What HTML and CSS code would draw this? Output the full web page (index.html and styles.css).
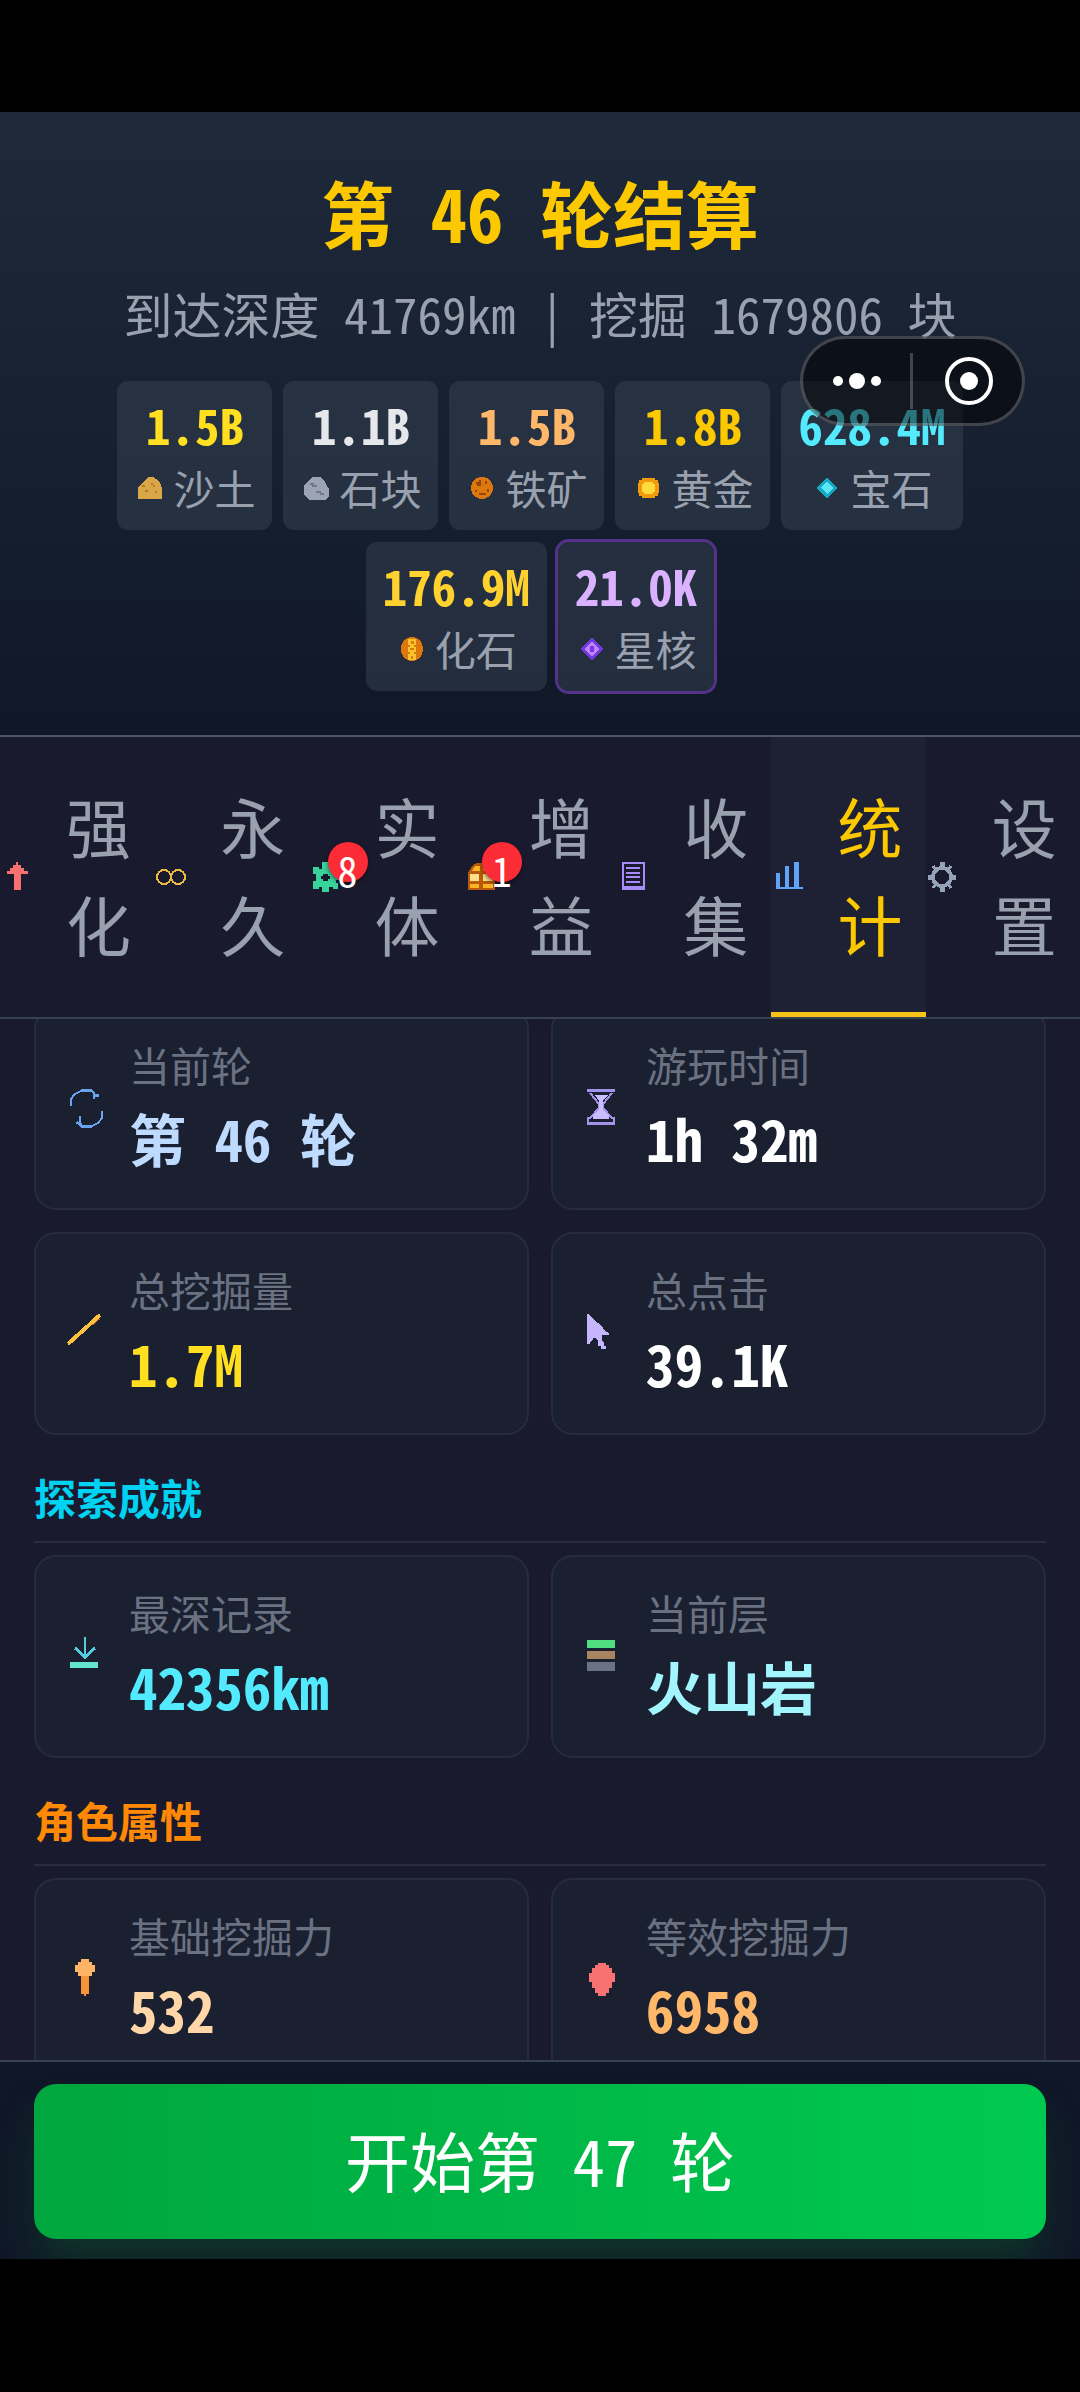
FILE: index.html
```html
<!DOCTYPE html>
<html lang="zh-CN">
<head>
<meta charset="utf-8">
<meta name="viewport" content="width=device-width, initial-scale=1">
<title>第 46 轮结算</title>
<link rel="stylesheet" href="styles.css">
</head>
<body>
<div class="app">
  <header class="summary">
    <h1 class="summary-title">第 46 轮结算</h1>
    <p class="summary-sub">到达深度 41769km | 挖掘 1679806 块</p>
    <ul class="ores">
      <li class="ore ore-sand">
        <strong class="ore-value">1.5B</strong>
        <span class="ore-label"><svg class="icon-sm" viewBox="0 0 34 34"><path fill="#d9a648" d="M4 28V17L8 12L12 8L14 6H19L22 8L26 12L28 17V28Z"/><path fill="#b47a24" d="M8 14h3v2h-3zM17 12h2v2h-2zM19 14h2v2h-2zM11 19h3v2h-3zM21 20h2v2h-2z"/></svg>沙土</span>
      </li>
      <li class="ore ore-stone">
        <strong class="ore-value">1.1B</strong>
        <span class="ore-label"><svg class="icon-sm" viewBox="0 0 34 34"><path fill="#9ca3b4" d="M8 10L12 6H20L24 9L27 15L29 18V25L25 29H9L4 24V15Z"/><path fill="#6f7787" d="M10 12h4v2h3v2h-5v-2h-2zM16 20h5v2h3v2h-4v-2h-4z"/></svg>石块</span>
      </li>
      <li class="ore ore-iron">
        <strong class="ore-value">1.5B</strong>
        <span class="ore-label"><svg class="icon-sm" viewBox="0 0 34 34"><circle cx="16" cy="17" r="11" fill="#dd780c"/><path fill="#97470e" d="M10 11h3v-2h2v6h-4v-2h-1zM19 10h2v3h-2zM9 19h2v2h-2zM21 18h2v3h-2zM13 22h7v2h-7z"/></svg>铁矿</span>
      </li>
      <li class="ore ore-gold">
        <strong class="ore-value">1.8B</strong>
        <span class="ore-label"><svg class="icon-sm" viewBox="0 0 34 34"><path fill="#f09a0e" d="M10 7H23V9H26V12H27V22H26V25H23V27H10V25H7V22H6V12H7V9H10Z"/><path fill="#ffdc3c" d="M12 11H21V13H23V21H21V23H12V21H10V13H12Z"/></svg>黄金</span>
      </li>
      <li class="ore ore-gem">
        <strong class="ore-value">628.4M</strong>
        <span class="ore-label"><svg class="icon-sm" viewBox="0 0 34 34"><path fill="#16a9c4" d="M16 7L27 17L16 27L5 17Z"/><path fill="#5de6f7" d="M16 10L22 17L16 23L10 17Z"/></svg>宝石</span>
      </li>
      <li class="ore ore-fossil">
        <strong class="ore-value">176.9M</strong>
        <span class="ore-label"><svg class="icon-sm" viewBox="0 0 34 34"><ellipse cx="16" cy="17" rx="11" ry="12" fill="#dd780c"/><path fill="#fcc42c" d="M12 7h8v6h-2v2h2v5h-2v2h2v6h-8v-6h2v-2h-2v-5h2v-2h-2z"/><path fill="#dd780c" d="M15 9h3v3h-3zM14 16h4v2h-4zM15 24h2v3h-2z"/></svg>化石</span>
      </li>
      <li class="ore ore-core">
        <strong class="ore-value">21.0K</strong>
        <span class="ore-label"><svg class="icon-sm" viewBox="0 0 34 34"><path fill="#7439e0" d="M16 5L27 17L16 29L5 17Z"/><path fill="#bd84fb" d="M16 9L23 17L16 25L9 17Z"/><path fill="#7439e0" d="M14 14h4v6h-4z"/></svg>星核</span>
      </li>
    </ul>
  </header>

  <nav class="tabs">
    <button class="tab" type="button">
      <span class="tab-icon"><svg viewBox="0 0 34 34"><path fill="#f87171" d="M16 2H18V5H21V8H24V11H28V14H21V30H14V14H7V11H10V8H13V5H16Z"/></svg></span>
      <span class="tab-text">强化</span>
    </button>
    <button class="tab" type="button">
      <span class="tab-icon"><svg viewBox="0 0 34 34"><g fill="none" stroke="#ecb944" stroke-width="2"><circle cx="10" cy="17" r="7"/><circle cx="24" cy="17" r="7"/></g></svg></span>
      <span class="tab-text">永久</span>
    </button>
    <button class="tab" type="button">
      <span class="tab-icon"><svg viewBox="0 0 34 34"><path fill="#38d39a" fill-rule="evenodd" d="M13 2H20V7H24V5H29V11H27V14H31V20H27V23H29V29H24V27H20V32H13V27H10V29H4V21H7V14H4V7H10V9H13ZM12 16V19H14V21H19V19H21V16H19V14H14V16Z"/></svg><span class="badge">8</span></span>
      <span class="tab-text">实体</span>
    </button>
    <button class="tab" type="button">
      <span class="tab-icon"><svg viewBox="0 0 34 34"><path fill="#b85a0a" d="M5 30V13L9 6L14 3H23L28 6L32 13V30Z"/><path fill="#fbb524" d="M9 11L12 6H17V11ZM20 6H24L28 11H20ZM7 24H16V28H7ZM20 24H30V28H20Z"/><path fill="#fde08a" d="M7 14H16V21H7ZM20 14H30V21H20Z"/></svg><span class="badge">1</span></span>
      <span class="tab-text">增益</span>
    </button>
    <button class="tab" type="button">
      <span class="tab-icon"><svg viewBox="0 0 34 34"><path fill="#a78bfa" d="M5 2H28V30H5Z"/><path fill="#1a1a2e" d="M7 4H26V26H7Z"/><path fill="#a78bfa" d="M9 7H23V9H9ZM9 12H23V14H9ZM9 16H23V18H9ZM9 21H23V23H9Z"/></svg></span>
      <span class="tab-text">收集</span>
    </button>
    <button class="tab tab-active" type="button" aria-current="page">
      <span class="tab-icon"><svg viewBox="0 0 34 34"><path fill="#60a5fa" d="M5 13H9V27H14V6H18V27H23V2H28V27H32V29H5Z"/></svg></span>
      <span class="tab-text">统计</span>
    </button>
    <button class="tab" type="button">
      <span class="tab-icon"><svg viewBox="0 0 34 34"><g fill="none" stroke="#94a3b8"><circle cx="16" cy="17" r="9" stroke-width="4"/><path stroke-width="5" d="M16 2V8M16 26V32M2 17H8M24 17H30"/><path stroke-width="3" d="M7 6L11 11M25 6L21 11M7 28L11 23M25 28L21 23"/></g></svg></span>
      <span class="tab-text">设置</span>
    </button>
  </nav>

  <main class="stats">
    <section class="stat-grid">
      <article class="stat"><svg class="stat-icon" viewBox="0 0 42 42"><path fill="none" stroke="#6ba4ee" stroke-width="2" d="M7 19V12L11 7L17 4H28L31 8"/><path fill="#6ba4ee" d="M17 2H28V5H17ZM29 5H31V7H35V10H31V12H29ZM12 36H15V29H17V36H18V39H15V37H12ZM17 38H28V41H17Z"/><path fill="none" stroke="#6ba4ee" stroke-width="2" d="M38 24V31L34 36L28 39H17L13 35"/></svg>
        <div class="stat-body"><div class="stat-label">当前轮</div><div class="stat-value blue">第 46 轮</div></div></article>
      <article class="stat"><svg class="stat-icon" viewBox="0 0 42 42"><path fill="#a292ea" d="M6 2H34V5H6ZM6 34V30H8V35H32V30H34V38H6Z"/><path fill="none" stroke="#a292ea" stroke-width="2" d="M9 6L18 17V21L8 32M31 6L22 17V21L32 32"/><path fill="#c9bcff" d="M14 8H27L22 14V23L28 28V32H12V28L18 23V14Z"/></svg>
        <div class="stat-body"><div class="stat-label">游玩时间</div><div class="stat-value">1h 32m</div></div></article>
      <article class="stat"><svg class="stat-icon" viewBox="0 0 42 42"><path stroke="#b45a12" stroke-width="3" d="M35 6L28 12"/><path stroke="#fac03e" stroke-width="4" d="M4 32L36 3"/></svg>
        <div class="stat-body"><div class="stat-label">总挖掘量</div><div class="stat-value yellow">1.7M</div></div></article>
      <article class="stat"><svg class="stat-icon" viewBox="0 0 42 42"><path fill="#c4b5fd" d="M6 2H8L11 6L17 11L22 16L25 20L28 21V23H21V28L23 31V34H25V37H20V34H17V28L14 26H12V28L9 30V32H6Z"/></svg>
        <div class="stat-body"><div class="stat-label">总点击</div><div class="stat-value">39.1K</div></div></article>
    </section>

    <h2 class="section-title cyan-title">探索成就</h2>
    <section class="stat-grid">
      <article class="stat"><svg class="stat-icon" viewBox="0 0 42 42"><path fill="#53cbe0" d="M20 2H22V24H20Z"/><path fill="none" stroke="#53cbe0" stroke-width="3" d="M11 13L21 22L31 13"/><path fill="#63e6cd" d="M6 27H34V33H6Z"/></svg>
        <div class="stat-body"><div class="stat-label">最深记录</div><div class="stat-value cyan">42356km</div></div></article>
      <article class="stat"><svg class="stat-icon" viewBox="0 0 42 42"><path fill="#50de82" d="M6 5H34V13H6Z"/><path fill="#a68560" d="M6 16H34V24H6Z"/><path fill="#6b7286" d="M6 27H34V36H6Z"/></svg>
        <div class="stat-body"><div class="stat-label">当前层</div><div class="stat-value pale-cyan">火山岩</div></div></article>
    </section>

    <h2 class="section-title orange-title">角色属性</h2>
    <section class="stat-grid">
      <article class="stat"><svg class="stat-icon" viewBox="0 0 42 42"><path fill="#f99538" d="M17 15H25V36H22V38H20V36H17Z"/><path fill="#ffb364" d="M17 1H25V4H28V7H31V14H28V18H14V14H11V7H14V4H17Z"/></svg>
        <div class="stat-body"><div class="stat-label">基础挖掘力</div><div class="stat-value peach">532</div></div></article>
      <article class="stat"><svg class="stat-icon" viewBox="0 0 42 42"><path fill="#f87272" d="M17 5H25V7H28V10H31V15H34V24H31V30H28V35H25V38H17V35H14V30H11V24H8V15H11V10H14V7H17Z"/></svg>
        <div class="stat-body"><div class="stat-label">等效挖掘力</div><div class="stat-value orange">6958</div></div></article>
    </section>
  </main>

  <footer class="actions">
    <button class="start" type="button">开始第 47 轮</button>
  </footer>

  <div class="capsule">
    <button class="capsule-btn capsule-more" type="button" aria-label="更多"><svg class="dots" viewBox="0 0 48 18"><circle cx="5" cy="9" r="5"/><circle cx="24" cy="9" r="8"/><circle cx="43" cy="9" r="5"/></svg></button>
    <button class="capsule-btn capsule-close" type="button" aria-label="关闭"><svg class="target" viewBox="0 0 48 48"><circle cx="24" cy="24" r="22" fill="none" stroke="#fff" stroke-width="4"/><circle cx="24" cy="24" r="9"/></svg></button>
  </div>
</div>
</body>
</html>
```
FILE: styles.css
```css
* {
  box-sizing: border-box;
  margin: 0;
  padding: 0;
}

body {
  height: 100vh;
  padding: 112px 0 133px;
  background: #000;
  color: #fff;
  font-family: "Noto Sans Mono CJK SC", "Noto Sans CJK SC", monospace;
  font-feature-settings: "hwid";
}

button {
  border: 0;
  background: none;
  color: inherit;
  font: inherit;
  font-feature-settings: inherit;
}

svg {
  display: block;
  flex: none;
}

.app {
  position: relative;
  display: flex;
  flex-direction: column;
  height: 100%;
  overflow: hidden;
  background: #1a1a2e;
}

/* Round summary */
.summary {
  padding: 44px 34px;
  border-bottom: 2px solid #4a5565;
  background: linear-gradient(#1e2939, #101828);
  text-align: center;
}

.summary-title {
  color: #fcc800;
  font-size: 73px;
  line-height: 110px;
}

.summary-sub {
  padding-top: 11px;
  color: #99a1af;
  font-size: 49px;
  line-height: 72px;
}

.ores {
  display: flex;
  flex-wrap: wrap;
  justify-content: center;
  gap: 12px 11px;
  padding-top: 32px;
  list-style: none;
}

.ore {
  padding: 7px 17px 14px;
  border-radius: 11px;
  background: rgba(54, 65, 83, 0.5);
}

.ore-value {
  display: block;
  font-size: 49px;
  line-height: 71px;
}

.ore-label {
  display: flex;
  align-items: center;
  justify-content: center;
  gap: 5px;
  color: #99a1af;
  font-size: 41px;
  line-height: 57px;
}

.icon-sm {
  width: 34px;
  height: 34px;
  shape-rendering: crispEdges;
}

.ore-sand .ore-value { color: #ffdf20; }
.ore-stone .ore-value { color: #e5e7eb; }
.ore-iron .ore-value { color: #ffb86a; }
.ore-gold .ore-value { color: #fcc800; }
.ore-gem .ore-value { color: #53eafd; }
.ore-fossil .ore-value { color: #ffd230; }
.ore-core .ore-value { color: #dab2ff; }

.ore-core {
  box-shadow: 0 0 0 3px #56338a;
}

/* Tabs */
.tabs {
  display: flex;
  border-bottom: 2px solid #364153;
}

.tab {
  display: flex;
  flex: 1 1 0;
  align-items: center;
  gap: 32px;
  min-width: 0;
  padding: 39px 0 34px;
  border-bottom: 5px solid transparent;
  color: #99a1af;
}

.tab-icon {
  position: relative;
  flex: none;
  width: 34px;
}

.tab-icon svg {
  width: 34px;
  height: 34px;
  shape-rendering: crispEdges;
}

.tab-text {
  width: 65px;
  padding-bottom: 6px;
  font-size: 65px;
  line-height: 98px;
  word-break: break-all;
}

.tab-active {
  border-color: #f6c416;
  background: #1d2133;
  color: #fcc800;
}

.badge {
  position: absolute;
  top: -18px;
  right: -25px;
  width: 40px;
  height: 40px;
  border-radius: 50%;
  background: #fb2c36;
  box-shadow: 0 2px 4px rgba(0, 0, 0, 0.5);
  color: #fff;
  font-size: 40px;
  line-height: 56px;
  text-align: center;
}

/* Statistics */
.stats {
  flex: 1 1 0;
  min-height: 0;
  overflow: hidden;
  padding: 0 34px;
}

.stat-grid {
  display: grid;
  grid-template-columns: 1fr 1fr;
  gap: 22px;
}

.stat-grid:first-child {
  margin-top: -12px;
}

.stat {
  display: flex;
  align-items: center;
  gap: 23px;
  padding: 26px 28px 27px;
  border: 2px solid #262b3d;
  border-radius: 22px;
  background: #1b2031;
}

.stat-icon {
  width: 42px;
  height: 42px;
  shape-rendering: crispEdges;
}

.stat-label {
  color: #6a7282;
  font-size: 41px;
  line-height: 58px;
}

.stat-value {
  font-size: 57px;
  font-weight: 700;
  line-height: 88px;
}

.blue { color: #bedbff; }
.yellow { color: #ffdf20; }
.cyan { color: #53eafd; }
.pale-cyan { color: #a2f4fd; }
.peach { color: #ffd6a8; }
.orange { color: #ffb86a; }

.section-title {
  margin: 34px 0 12px;
  padding-bottom: 16px;
  border-bottom: 2px solid #292c3f;
  font-size: 42px;
  line-height: 56px;
}

.cyan-title { color: #00d3f2; }
.orange-title { color: #ff8904; }

/* Bottom action */
.actions {
  padding: 22px 34px 20px;
  border-top: 2px solid #364153;
  background: #101828;
}

.start {
  display: block;
  width: 100%;
  padding: 26px 28px 30px;
  border-radius: 22px;
  background: linear-gradient(90deg, #00a63e, #00c950);
  box-shadow: 0 28px 42px -8px rgba(13, 84, 43, 0.5);
  font-size: 65px;
  line-height: 99px;
}

/* Host capsule floating over the page */
.capsule {
  position: absolute;
  top: 224px;
  right: 55px;
  display: flex;
  width: 225px;
  height: 90px;
  border: 3px solid rgba(255, 255, 255, 0.22);
  border-radius: 45px;
  background: rgba(0, 0, 0, 0.5);
}

.capsule-btn {
  display: flex;
  align-items: center;
  justify-content: center;
}

.capsule-more {
  flex: 0 0 107px;
}

.capsule-close {
  flex: 1 1 0;
  justify-content: flex-start;
  gap: 32px;
}

.capsule-close::before {
  width: 3px;
  height: 56px;
  background: rgba(255, 255, 255, 0.22);
  content: "";
}

.dots {
  width: 48px;
  height: 18px;
  fill: #fff;
}

.target {
  width: 48px;
  height: 48px;
  fill: #fff;
}
```
